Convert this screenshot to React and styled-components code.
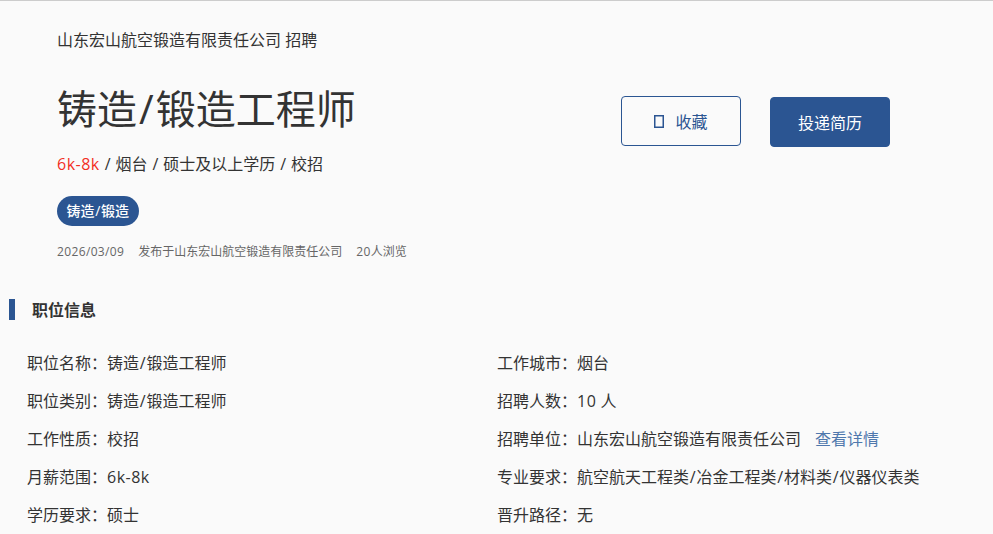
import React from "react";
import styled, { createGlobalStyle } from "styled-components";

const Global = createGlobalStyle`
  html, body { margin: 0; padding: 0; background: #fafafa; }
  body { font-family: "Open Sans", "Noto Sans CJK SC", sans-serif; color: #333; overflow: hidden; }
`;
const Page = styled.div`
  width: 993px; height: 534px; overflow: hidden; box-sizing: border-box;
  border-top: 1px solid #ccc; background: #fafafa;
`;
const Header = styled.header`
  display: flex; justify-content: space-between; align-items: flex-start;
  padding: 27px 103px 0 57px;
`;
const Info = styled.div`display: flex; flex-direction: column; align-items: flex-start;`;
const Company = styled.div`font-size: 16px; line-height: 24px; color: #333;`;
const Title = styled.h1`
  margin: 27px 0 0; font-size: 40px; line-height: 60px; font-weight: 400; color: #333;
`;
const Summary = styled.div`margin-top: 13px; font-size: 16px; line-height: 24px; color: #333;`;
const Latin = styled.span`letter-spacing: 0.03em;`;
const Slash = styled.span`padding: 0 0.05em;`;
const Salary = styled(Latin)`color: #f22f1f;`;
const Tag = styled.span`
  margin-top: 20px; height: 30px; line-height: 30px; padding: 0 9.5px; border-radius: 15px;
  background: #2b5592; color: #fff; font-size: 14px; font-weight: 500;
`;
const Meta = styled.div`
  margin-top: 17px; display: flex; gap: 14px; font-size: 12px; line-height: 18px; color: #666;
`;
const Actions = styled.div`display: flex; align-items: flex-start; gap: 29px; margin-top: 68px;`;
const Button = styled.button`
  box-sizing: border-box; width: 120px; height: 50px; margin-top: ${p => (p.$primary ? "1px" : "0")};
  display: flex; align-items: center; justify-content: center; gap: 11px;
  border: 1px solid #2b5592; border-radius: 4px; font: inherit; font-size: 16px;
  background: ${p => (p.$primary ? "#2b5592" : "transparent")};
  color: ${p => (p.$primary ? "#fff" : "#2b5592")};
`;
const Icon = styled.svg`width: 10px; height: 13px; display: block; flex: none;`;
const Section = styled.section`margin-top: 38px;`;
const SectionTitle = styled.h2`
  margin: 0 0 0 9px; padding: 1px 0 0 17px; border-left: 6px solid #2b5592;
  font-size: 16px; line-height: 20px; font-weight: 700; color: #333;
`;
const Grid = styled.div`
  margin-top: 24px; padding-left: 27px;
  display: grid; grid-template-columns: 470px 1fr; grid-auto-rows: 38px;
`;
const Row = styled.div`font-size: 16px; line-height: 38px; color: #333; white-space: nowrap;`;
const Detail = styled.a`margin-left: 14px; color: #4f78ad; text-decoration: none;`;

export default function App() {
  return (
    <Page>
      <Global />
      <Header>
        <Info>
          <Company>山东宏山航空锻造有限责任公司 招聘</Company>
          <Title>铸造<Slash>/</Slash>锻造工程师</Title>
          <Summary><Salary>6k-8k</Salary> <Slash>/</Slash> 烟台 <Slash>/</Slash> 硕士及以上学历 <Slash>/</Slash> 校招</Summary>
          <Tag>铸造<Slash>/</Slash>锻造</Tag>
          <Meta>
            <Latin>2026/03/09</Latin>
            <span>发布于山东宏山航空锻造有限责任公司</span>
            <span><Latin>20</Latin>人浏览</span>
          </Meta>
        </Info>
        <Actions>
          <Button>
            <Icon viewBox="0 0 10 13"><rect x="0.75" y="0.75" width="8.5" height="11.5" fill="none" stroke="#2b5592" strokeWidth="1.5" /></Icon>
            收藏
          </Button>
          <Button $primary>投递简历</Button>
        </Actions>
      </Header>
      <Section>
        <SectionTitle>职位信息</SectionTitle>
        <Grid>
          <Row>职位名称：铸造<Slash>/</Slash>锻造工程师</Row>
          <Row>工作城市：烟台</Row>
          <Row>职位类别：铸造<Slash>/</Slash>锻造工程师</Row>
          <Row>招聘人数：<Latin>10</Latin> 人</Row>
          <Row>工作性质：校招</Row>
          <Row>招聘单位：山东宏山航空锻造有限责任公司<Detail>查看详情</Detail></Row>
          <Row>月薪范围：<Latin>6k-8k</Latin></Row>
          <Row>专业要求：航空航天工程类<Slash>/</Slash>冶金工程类<Slash>/</Slash>材料类<Slash>/</Slash>仪器仪表类</Row>
          <Row>学历要求：硕士</Row>
          <Row>晋升路径：无</Row>
        </Grid>
      </Section>
    </Page>
  );
}
